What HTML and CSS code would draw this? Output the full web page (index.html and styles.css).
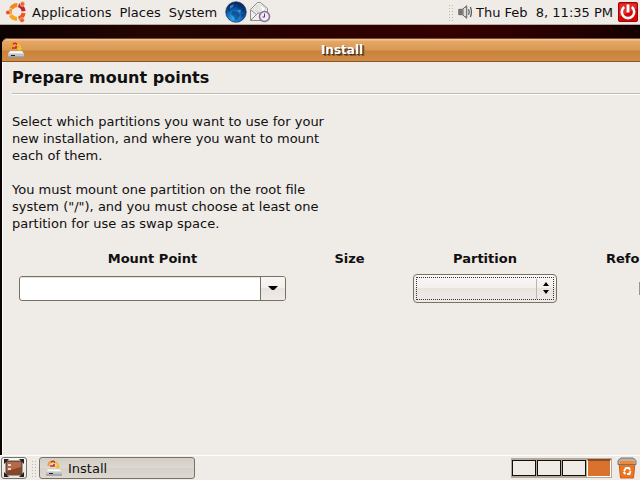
FILE: index.html
```html
<!DOCTYPE html>
<html lang="en">

<head>
    <meta charset="UTF-8">
    <meta name="viewport" content="width=device-width, initial-scale=1.0">
    <title>Install</title>
    <link rel="stylesheet" href="styles.css">
</head>

<body>
    <!-- Top panel -->
    <header class="panel panel-top">
        <nav class="menu">
            <svg class="logo" viewBox="0 0 22 22" width="22" height="22" aria-hidden="true">
                <g fill="none" stroke-width="4">
                    <path d="M6.2 7.5A7 7 0 0 1 12.3 4" stroke="#f08a1c" />
                    <path d="M13.5 4.2A7 7 0 0 1 18.6 10.2" stroke="#c8202c" />
                    <path d="M18.6 12A7 7 0 0 1 13.6 17.6" stroke="#ee5a1c" />
                    <path d="M12 18A7 7 0 0 1 5.8 14.2" stroke="#f8a61c" />
                    <path d="M5.6 13.500A7 7 0 0 1 6 8" stroke="#f4941c" stroke-width="3" />
                </g>
                <circle cx="3" cy="11.5" r="2.3" fill="#e85020" stroke="#efebe7" stroke-width="0.6" />
                <circle cx="17.5" cy="3" r="2.4" fill="#ee6a1c" stroke="#efebe7" stroke-width="0.6" />
                <circle cx="17" cy="19.2" r="2.4" fill="#e8641c" stroke="#efebe7" stroke-width="0.6" />
            </svg>
            <a href="#applications">Applications</a>
            <a href="#places">Places</a>
            <a href="#system">System</a>
        </nav>
        <div class="launchers">
            <button class="icon-btn" aria-label="Web Browser">
                <svg viewBox="0 0 22 22" width="22" height="22">
                    <defs>
                        <radialGradient id="globe" cx="0.4" cy="0.8" r="0.8">
                            <stop offset="0" stop-color="#35b0f0" />
                            <stop offset="0.5" stop-color="#0d62b4" />
                            <stop offset="1" stop-color="#06225c" />
                        </radialGradient>
                    </defs>
                    <circle cx="11" cy="11" r="10.3" fill="url(#globe)" stroke="#0a2a5c" stroke-width="0.6" />
                    <path d="M4 4l5-2 2 2-2 3-3 1-2 3-2-2zM13 3l4 2 3 5-3 1-1-3-4-1zM8 10l4 1 3 3-2 4-3 2-1-4-3-3zM16 13l3 0-2 4z" fill="#08285e" opacity="0.5" />
                    <path d="M5 5l4-2-1 3-3 2zM12 9l4 0-1 3z" fill="#5fb4e8" opacity="0.6" />
                </svg>
            </button>
            <button class="icon-btn" aria-label="Mail">
                <svg viewBox="0 0 22 22" width="22" height="22">
                    <path d="M1.5 8.5L8.5 1.5h3l7 6v12h-17z" fill="#eeeeec" stroke="#8c8e8a" />
                    <path d="M4 8l5-4h3l5 4-6 5z" fill="#fff" stroke="#c4c6c2" stroke-width="0.7" />
                    <path d="M6 8h7M7 6h5M7 10h6" stroke="#b8bab6" stroke-width="0.8" />
                    <path d="M2 19l7-7 3 0 6 7M2 9l6 5" fill="none" stroke="#8c8e8a" />
                    <circle cx="15.5" cy="15.5" r="5" fill="#f0ebf2" stroke="#8a6c96" stroke-width="1.5" />
                    <path d="M15.5 12.5v3.5h-2" fill="none" stroke="#5c3c68" />
                </svg>
            </button>
        </div>
        <div class="tray">
            <span class="grip"></span>
            <button class="icon-btn" aria-label="Volume">
                <svg viewBox="0 0 18 18" width="16" height="16">
                    <path d="M2 6h4l5-4v14l-5-4h-4z" fill="#a0a29e" stroke="#55575a" />
                    <path d="M3.5 7v4M5.5 7v4" stroke="#333" stroke-width="0.8" />
                    <path d="M9 4.5v9" stroke="#e4e4e2" stroke-width="2" />
                    <path d="M13 6q1.5 3 0 6" fill="none" stroke="#555753" stroke-width="1.4" />
                    <path d="M15 3.500q2.500 5.500 0 11" fill="none" stroke="#555753" stroke-width="1.4" />
                </svg>
            </button>
            <time class="clock">Thu Feb &nbsp;8, 11:35 PM</time>
            <button class="icon-btn" aria-label="Quit">
                <svg viewBox="0 0 22 22" width="22" height="22">
                    <rect x="1.500" y="1.500" width="19" height="19" rx="1" fill="#d40808" stroke="#a00" />
                    <path d="M2.500 2.500h17v5l-17 8z" fill="#ea4a4a" opacity="0.6" />
                    <path d="M7.200 6A6.200 6.200 0 1 0 14.800 6" fill="none" stroke="#fff" stroke-width="2.600" />
                    <path d="M11 3.500v8" stroke="#fff" stroke-width="2.800" />
                </svg>
            </button>
        </div>
    </header>

    <!-- Desktop with the installer window -->
    <main class="desktop">
        <section class="window">
            <div class="titlebar">
                <svg class="title-icon" viewBox="0 0 16 16" width="16" height="16" aria-hidden="true">
                    <use href="#install-icon" />
                </svg>
                <span class="title">Install</span>
            </div>
            <div class="content">
                <h1>Prepare mount points</h1>
                <div class="intro">
                    <p>Select which partitions you want to use for your new installation, and where you want to mount each of them.</p>
                    <p>You must mount one partition on the root file system ("/"), and you must choose at least one partition for use as swap space.</p>
                </div>
                <table class="mounts">
                    <thead>
                        <tr>
                            <th class="col-mount" id="mount-label">Mount Point</th>
                            <th class="col-size">Size</th>
                            <th class="col-partition" id="partition-label">Partition</th>
                            <th class="col-reformat" id="reformat-label">Reformat?</th>
                        </tr>
                    </thead>
                    <tbody>
                        <tr>
                            <td>
                                <div class="combo">
                                    <input type="text" class="combo-text" aria-labelledby="mount-label">
                                    <button class="combo-btn" aria-label="Show mount points">
                                        <svg viewBox="0 0 10 5" width="10" height="5"><path d="M0 0h10L6 4H4z" /></svg>
                                    </button>
                                </div>
                            </td>
                            <td></td>
                            <td>
                                <div class="picker">
                                    <select aria-labelledby="partition-label">
                                        <option></option>
                                    </select>
                                    <svg class="picker-arrows" viewBox="0 0 6 12" width="6" height="12"><path d="M0 4L3 0L6 4zM0 8h6L3 12z" /></svg>
                                </div>
                            </td>
                            <td><input type="checkbox" class="check" aria-labelledby="reformat-label"></td>
                        </tr>
                    </tbody>
                </table>
            </div>
        </section>
    </main>

    <!-- Bottom panel -->
    <footer class="panel panel-bottom">
        <button class="panel-btn show-desktop" aria-label="Show Desktop">
            <svg viewBox="0 0 20 18" width="20" height="18">
                <rect x="2" y="2" width="16" height="14" fill="#8a4526" stroke="#555753" />
                <path d="M3 3h14v5L3 12z" fill="#b46a48" />
                <path d="M4 5h3v2H4zM4 9h3v2H4z" fill="#f0d8c8" />
                <path d="M0 0h5L0 5zM20 0h-5l5 5zM0 18h5l-5-5zM20 18h-5l5-5z" fill="#222" />
            </svg>
        </button>
        <span class="grip"></span>
        <button class="panel-btn task">
            <svg viewBox="0 0 16 16" width="16" height="16" aria-hidden="true">
                <g id="install-icon">
                    <path d="M2 9h12l2 3H0z" fill="#fafafa" stroke="#c8c8c6" stroke-width="0.5" />
                    <rect y="11.500" width="16" height="4" rx="1" fill="#c2c4c6" />
                    <path d="M0 15h16" stroke="#85878a" />
                    <path d="M3 13.500h4" stroke="#222" />
                    <path d="M2.500 6Q2 2 6 2" fill="none" stroke="#f4a01c" stroke-width="2" />
                    <path d="M5 2Q8 0 9 3M4 6h4V4" fill="none" stroke="#d8281c" stroke-width="1.600" />
                    <path d="M9 2.500q3 0 3 4" fill="none" stroke="#f0c41c" stroke-width="2" />
                    <path d="M8.500 6h6l-3 3z" fill="#e8c81c" />
                </g>
            </svg>
            Install
        </button>
        <div class="workspaces">
            <button aria-label="Workspace 1"></button>
            <button aria-label="Workspace 2"></button>
            <button aria-label="Workspace 3"></button>
            <button class="active" aria-label="Workspace 4"></button>
        </div>
        <button class="icon-btn trash" aria-label="Trash">
            <svg viewBox="0 0 20 22" width="20" height="22">
                <path d="M2 6h16l-1.500 15h-13z" fill="#ee7420" stroke="#c8601c" />
                <path d="M1 3.500l3-2.500h12l3 2.500v4H1z" fill="#b8b4ac" stroke="#77736c" />
                <path d="M3 4h14v3H3z" fill="#f08a38" />
                <path d="M7 14l2-3h3l1 2M13.500 14l-1 3H10M8.500 17l-2-2" fill="none" stroke="#fff" stroke-width="1.800" />
            </svg>
        </button>
    </footer>
</body>

</html>
```
FILE: styles.css
```css
* {
    box-sizing: border-box;
}

body {
    margin: 0;
    height: 100vh;
    display: flex;
    flex-direction: column;
    overflow: hidden;
    font-family: "DejaVu Sans", Verdana, sans-serif;
    font-size: 13px;
    line-height: 17px;
    color: #101010;
    background-color: #efebe7;
}

button {
    font: inherit;
    color: inherit;
    padding: 0;
    margin: 0;
}

svg {
    display: block;
}

/* Panels */
.panel {
    display: flex;
    align-items: center;
    flex: none;
    height: 25px;
    background-color: #efebe7;
}

.panel-top {
    border-bottom: 1px solid #b5ae9c;
    padding: 0 1px 0 5px;
}

.panel-bottom {
    border-top: 1px solid #fff;
    padding: 0 3px 0 1px;
}

.menu {
    display: flex;
    align-items: center;
    gap: 8px;
}

.menu a {
    color: inherit;
    text-decoration: none;
}

.logo {
    margin-right: -3px;
}

.launchers {
    display: flex;
    gap: 2px;
    margin-left: 8px;
}

.icon-btn {
    border: none;
    background: none;
}

.tray {
    display: flex;
    align-items: center;
    margin-left: auto;
}

.tray .icon-btn {
    margin-left: 4px;
}

.clock {
    margin-left: 3px;
}

.grip {
    width: 5px;
    height: 17px;
    background-image: radial-gradient(circle, #bdb8b0 1px, transparent 1px);
    background-size: 3px 3px;
}

/* Desktop */
.desktop {
    flex: 1;
    min-height: 0;
    display: flex;
    padding: 13px 0 0 2px;
    overflow: hidden;
    background: radial-gradient(ellipse 240px 60px at 70% 0, #380000, transparent), linear-gradient(90deg, #0c0202, #260500 25%, #1c0000 60%, #0c0000);
}

/* The window runs past the right edge of the screen */
.window {
    flex: none;
    width: calc(100% + 42px);
    display: flex;
    flex-direction: column;
    border-radius: 6px 6px 0 0;
    background-color: #efebe7;
}

.titlebar {
    display: flex;
    align-items: center;
    height: 24px;
    padding: 0 6px;
    border-top: 1px solid #7a4c24;
    border-bottom: 1px solid #8a5626;
    border-radius: 6px 6px 0 0;
    background: linear-gradient(#f2c598 1px, #e6a868 2px, #d89850 11px, #c8823c 12px, #d08c46);
}

.title {
    flex: 1;
    margin-right: 16px;
    text-align: center;
    font-weight: bold;
    font-size: 12px;
    color: #fff;
    text-shadow: 1px 1px 0 #4a3018, 2px 2px 0 #80582c;
}

.content {
    flex: 1;
    padding: 0 10px;
    border-left: 1px solid #fff;
}

h1 {
    margin: 0 0 19px -1px;
    padding: 6px 0 5px;
    font-size: 16px;
    line-height: 20px;
    border-bottom: 1px solid #c0bbb4;
    box-shadow: 0 1px 0 #fff;
}

.intro {
    width: 326px;
    margin-left: -1px;
}

.intro p {
    margin: 0 0 17px;
}

/* Mount point table */
.mounts {
    width: 712px;
    margin-left: 6px;
    table-layout: fixed;
    border-collapse: collapse;
}

.mounts th,
.mounts td {
    padding: 0;
    text-align: center;
}

.mounts th {
    height: 25px;
    padding-bottom: 7px;
}

.col-mount {
    width: 267px;
}

.col-size {
    width: 127px;
}

.col-partition {
    width: 144px;
}

.combo {
    display: flex;
    height: 25px;
    border: 1px solid #7a7062;
    border-radius: 3px;
    background-color: #fff;
    overflow: hidden;
}

.combo-text {
    flex: 1;
    min-width: 0;
    padding: 0 4px;
    border: none;
    font: inherit;
    background: none;
    box-shadow: inset 0 1px 0 #e4e0dc;
}

.combo-btn {
    display: flex;
    align-items: center;
    justify-content: center;
    width: 25px;
    border: none;
    border-left: 1px solid #7a7062;
    background: linear-gradient(#f8f6f4, #f2efec 50%, #e8e3df 50%, #efebe8);
}

.picker {
    position: relative;
}

.picker select {
    display: block;
    width: 100%;
    height: 29px;
    appearance: none;
    font: inherit;
    border: 1px solid #7a7062;
    border-radius: 4px;
    outline: 1px dotted #333;
    outline-offset: -4px;
    background: linear-gradient(#bdb6ae, #bdb6ae) right 19px center / 1px 20px no-repeat, linear-gradient(#f9f7f6, #f2efec 50%, #e9e4e0 50%, #efebe8);
}

.picker-arrows {
    position: absolute;
    top: 8px;
    right: 8px;
    pointer-events: none;
}

.check {
    display: block;
    margin: 0 auto;
    appearance: none;
    width: 11px;
    height: 13px;
    border: 1px solid #9c9488;
    background-color: #fff;
}

/* Taskbar */
.panel-btn {
    display: flex;
    align-items: center;
    height: 22px;
    border: 1px solid #7a7062;
    border-radius: 3px;
    background: linear-gradient(#f8f6f4, #e9e4e0);
}

.show-desktop {
    justify-content: center;
    width: 26px;
    margin-right: 4px;
}

.task {
    width: 156px;
    margin-left: 3px;
    padding: 0 6px;
    gap: 6px;
    background: linear-gradient(#d2cdc6, #ddd8d2 50%, #d6d0c9 50%, #ddd8d2);
}

.workspaces {
    display: flex;
    gap: 1px;
    width: 101px;
    height: 20px;
    margin-left: auto;
    padding: 1px;
    background-color: #b5a898;
}

.workspaces button {
    flex: 1;
    margin: 1px 0;
    border: 1px solid #101010;
    outline: 1px solid #b5a898;
    background-color: #efebe7;
}

.workspaces .active {
    margin: 0;
    border: 1px solid #fff;
    border-top: 2px solid #8a4a24;
    background-color: #d9722c;
}

.trash {
    margin-left: 5px;
}
```
